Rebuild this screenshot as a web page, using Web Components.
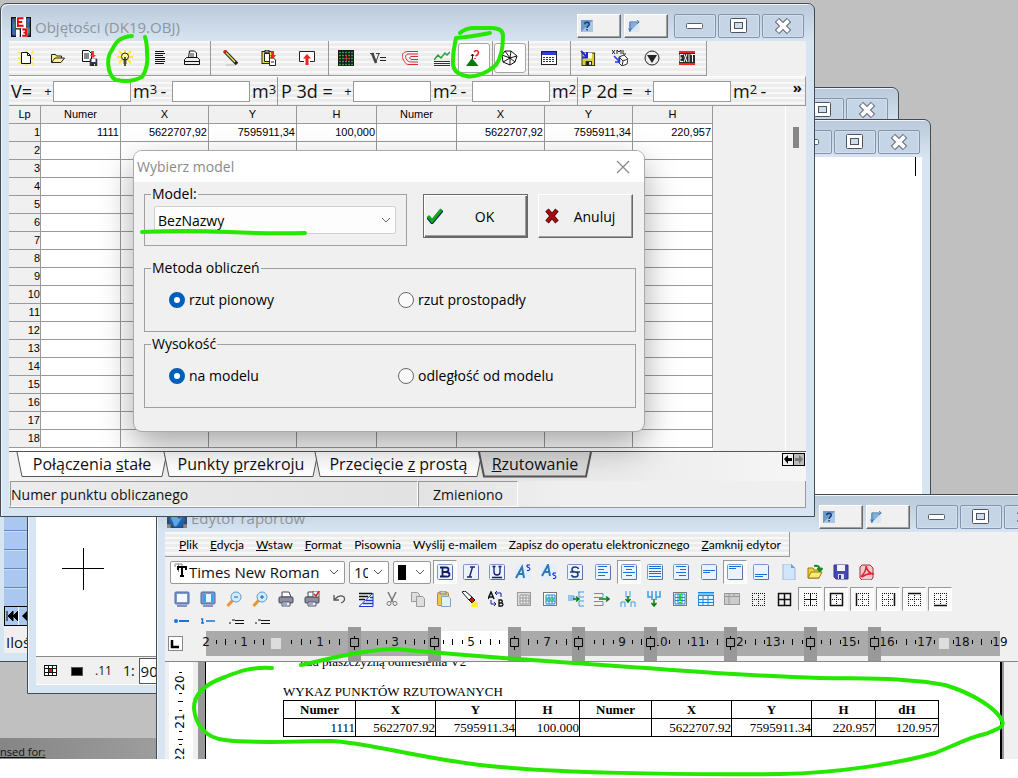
<!DOCTYPE html>
<html lang="pl">
<head>
<meta charset="utf-8">
<title>Objętości</title>
<style>
  html, body { margin: 0; height: 100%; background: #fff; overflow: hidden; }
  body { font-family: "Open Sans", "Noto Sans", sans-serif; font-size: 14px; color: #111; position: relative; }
</style>
</head>
<body>
<mdi-desktop></mdi-desktop>
<marker-strokes></marker-strokes>

<script>
const define = (name, html, setup) => {
  const template = document.createElement('template');
  template.innerHTML = html;
  customElements.define(name, class extends HTMLElement {
    static get observedAttributes() { return ['name']; }
    constructor() {
      super();
      this.attachShadow({ mode: 'open' }).append(template.content.cloneNode(true));
    }
    connectedCallback() { if (setup) setup.call(this, this.shadowRoot); }
    attributeChangedCallback() { if (this.isConnected && setup) setup.call(this, this.shadowRoot); }
  });
};

/* ---------- icon drawings, 16 x 16 grid ---------- */
const doc = (x, y) => `<path d="M${x} ${y}h6l3 3v8h-9z" fill="#fff" stroke="#111"/><path d="M${x + 6} ${y}v3h3" fill="none" stroke="#111"/>`;
const box = '<rect x=".5" y=".5" width="15" height="15" rx="1" fill="#eaf3ff" stroke="#7d97c9"/><path d="M15.500 2v13.500H2" fill="none" stroke="#5872ae"/>';
const lines = a => a.map(([x, y, w]) => `<path d="M${x} ${y}.5h${w}" stroke="#1670d8"/>`).join('');
const tblBox = '<rect x="1.500" y="1.500" width="13" height="13" fill="#fff" stroke="#777"/>';
const dotted = '<path d="M2 2.500h13M2 8.500h13M2 14.500h13M2.500 2v13M8.500 2v13M14.500 2v13" stroke="#111" stroke-dasharray="1 1" fill="none"/>';
const floppy = (x, y, s, c) => `<g transform="translate(${x} ${y}) scale(${s})"><rect x="0" y="0" width="14" height="14" fill="${c}" stroke="#222"/><rect x="3" y="0" width="8" height="6" fill="#fff"/><rect x="4" y="9" width="7" height="5" fill="#222"/><rect x="8" y="10" width="2" height="3" fill="#fff"/></g>`;
const printer = '<path d="M4 1h7l2 5H4z" fill="#fff" stroke="#445"/><rect x="1" y="6" width="14" height="6" rx="1" fill="#8d8f9c" stroke="#44465a"/><path d="M4 11h8v4H4z" fill="#eef" stroke="#556"/><path d="M5 13h4" stroke="#36c"/>';
const loupe = '<path d="M1.500 15L7 9" stroke="#e8962e" stroke-width="3"/><circle cx="10" cy="6" r="5" fill="#d3ecfb" stroke="#5b9bd0"/><path d="M8 6h4" stroke="#0a5ac8"/>';
const monitor = c => `<rect x="1" y="1" width="14" height="12" rx="1" fill="#7d97c9" stroke="#4f6aa8"/><rect x="3" y="3" width="10" height="8" fill="${c}"/><path d="M3 15h10" stroke="#8d8fc0" stroke-width="2"/>`;
const ICONS = {
  app: '<rect width="16" height="16" fill="#111"/><path d="M1 1h3v14H1zM12 1h3v14h-3z" fill="#456"/><path d="M1 2h1v2h1v3H2v3h1v4H1zM13 1h2v3h-1v4h1v5h-2z" fill="#3a6ad0"/><path d="M2 6h1v3H2zM14 9h1v4h-1z" fill="#3da552"/><rect x="4" y="0" width="8" height="9" fill="#fff"/><path d="M5 1h5M5 4h4M5 7h5M5.500 1v7" stroke="#e00" stroke-width="1.500"/><rect x="4" y="10" width="3" height="6" fill="#fff"/><rect x="8" y="9" width="5" height="7" fill="#fff"/><path d="M9 10h3v5H9M10 12.500h2" stroke="#e00" stroke-width="1.500" fill="none"/>',
  globe: '<rect width="16" height="16" fill="#38465e"/><circle cx="8" cy="9" r="6.500" fill="#1763b5"/><path d="M3 8q3-4 5-1t4 0-2 4-5 1z" fill="#62a4df"/><path d="M0 13h3v3H0zM13 13h3v3h-3z" fill="#888"/>',
  help: '<rect width="16" height="16" fill="#a9c6e3"/><path d="M0 16V0h16z" fill="#6c9acb"/><path d="M5 5.500C5 2 11 2 11 5.500 11 8 8 7.500 8 10.500M8 12v2" fill="none" stroke="#123a78" stroke-width="2"/>',
  dock: '<rect x="2" y="3" width="13" height="13" fill="#dbe8f4"/><path d="M2 16V3h13z" fill="#86afd6"/><path d="M2.500 16V2.500H14M12 0l3 2.500-3 2.500M0 11l2.500 3L5 11" fill="none" stroke="#1d5b9d"/>',
  newdoc: '<path d="M0 2l3 2M0 8h3M0 14l3-2M16 1l-3 3M16 8h-3M16 15l-3-3M8 0v2M8 14v2" stroke="#ffef4a" stroke-width="2"/>' + doc(3.5, 2.5),
  open: '<path d="M1.500 12.500v-8h4l1 1.500h5v2" fill="#fff28a" stroke="#222"/><path d="M1.500 12.500L5 8h9.500L11 12.500z" fill="#fff28a" stroke="#222"/>',
  savetxt: '<path d="M.500.500h6l3 3v8h-9z" fill="#fff" stroke="#111"/><path d="M2 4h5M2 6h5M2 8h5" stroke="#111"/>' + floppy(8, 9, .5, '#3a3a55') + '<path d="M9 1h3v4h2l-3 3-3-3h2V3H9z" fill="#f33"/>',
  bulb: '<path d="M8 0v16M0 7h16M2 1l12 12M14 1L2 13" stroke="#ffe92e" stroke-width="2"/><circle cx="8" cy="6.500" r="3.500" fill="#ffffa0" stroke="#222"/><path d="M6.500 11h3M6.500 13h3M7 15h2M8 7v3" stroke="#222" stroke-width="1.500"/>',
  text: '<path d="M3 1.500h9M3 3.500h10M3 5.500h8M3 7.500h10M3 9.500h10M3 11.500h10M3 13.500h9" stroke="#111"/>',
  print: '<path d="M4.500 8l1-7h5l2 2v5" fill="#fff" stroke="#111"/><path d="M6 4h4M6 6h4" stroke="#333"/><path d="M.500 9.500l2-2h11l2 2v5H.500z" fill="#eee" stroke="#111"/><path d="M1 11.500h14" stroke="#111"/>',
  pencil: '<path d="M1.500 1l12.500 13" stroke="#222" stroke-width="3.500"/><path d="M3 2.500l9 9.500" stroke="#e8df5a" stroke-width="1.500"/><path d="M1 .500l2 2" stroke="#d22" stroke-width="3"/><path d="M3 15h9" stroke="#bbb"/>',
  clip: '<rect x="1" y="1.500" width="10" height="12" fill="#f5e23c" stroke="#222"/><path d="M3.500 3.500h5v8h-5z" fill="#fff" stroke="#222"/><rect x="4" y="0" width="4" height="3" fill="#999" stroke="#222"/><path d="M8.500 8h4l2 2v5.500h-6z" fill="#fff" stroke="#222"/><path d="M10 12h3" stroke="#222"/><path d="M10 1h3v4h2l-3 4-3-4h2V3h-1z" fill="#e22"/>',
  up: '<path d="M5 11.500H.500v-10h15v10H11" fill="#fff" stroke="#222"/><path d="M8 4l4 4.500H9.500V15h-3V8.500H4z" fill="#e22"/>',
  grid: '<rect width="16" height="16" fill="#151a15"/><path d="M1 2.500h15M1 5.500h15M1 8.500h15M1 11.500h15M1 14.500h15" stroke="#2ea043" stroke-width="1.500" stroke-dasharray="2 1"/><path d="M6 8.500h5M8.500 6v5" stroke="#a33" stroke-dasharray="2 1"/>',
  vol: '<path d="M0 3.500h4M6 3.500h4" stroke="#444"/><path d="M2 3l4 10" stroke="#444" stroke-width="2.500"/><path d="M5.500 13L9 3.500" stroke="#444"/><path d="M10 7.500h6M10 10.500h6" stroke="#222"/>',
  coil: '<path d="M16 1.500H6C1 1.500-1 5 1 9s3 5.500 6 5.500h9M16 4H7C4 4 3 6 4 8.500S7 12 9 12h7M16 6.500H9q-3 1 0 3h7" fill="none" stroke="#c33"/>',
  chart: '<path d="M0 10l4-5 3 3 4-5 2 2 3-3" stroke="#2a9d3a" fill="none" stroke-width="1.500"/><path d="M0 11.500h16M0 15.500h16M0 13.500h16" stroke="#333"/>',
  cone: '<path d="M6 8l6.500 8H0z" fill="#087b12"/><path d="M6.500 9V4M5 6l1.500-2L8 6" stroke="#222" fill="none"/><path d="M8 2q3-3 4.500 0 0 3-3 4M9 8v1" stroke="#e22" fill="none" stroke-width="1.500"/>',
  mesh: '<path d="M3 1h6l6 5-2 6-5 3-7-3-1-7zM0 5l8 3 7-2M3 1l5 7 1-7M8 8l0 7M8 8l5 4M1 12l7-4" fill="#fff" stroke="#111"/>',
  sheet: '<rect x=".5" y="1.500" width="15" height="13" fill="#fff" stroke="#222"/><rect x="1" y="2" width="14" height="3" fill="#2d3fd0"/><path d="M2 7.500h12M2 9.500h12M2 11.500h12" stroke="#333" stroke-dasharray="2 1"/>',
  savegeo: floppy(2, 3, .9, '#d8d02e') + '<path d="M1 1l6 6M7 2v5.500H2" stroke="#1c2be0" stroke-width="2" fill="none"/>',
  xml: '<path d="M0 0l3 4M3 0L0 4M5 4V0l2 2 2-2v4M11 0v4h3" stroke="#222" fill="none"/><path d="M7 7l5-2 4 4-1 5-5 2-3-3zM7 7l4 4 5-2M11 11l-1 5" fill="#fff" stroke="#333"/><path d="M2 6l5 5M7.500 7v5H3" stroke="#2233dd" fill="none" stroke-width="1.500"/>',
  tri: '<circle cx="8" cy="8" r="7" fill="#eee" stroke="#222"/><path d="M3 5h10l-5 8z" fill="#222"/>',
  exit: '<rect y="1" width="16" height="14" fill="#2a2a2a"/><path d="M0 2h16M0 14h16" stroke="#f22" stroke-width="2"/><path d="M4 4.500H1v7h3M1 8h2M5 4l3 8M8 4l-3 8M10 4v8M11.500 4.500H16M13.500 4v8" stroke="#fff" fill="none"/>',
  bold: box + '<path d="M5.500 3v10M3 3.500h6q2.500 0 2.500 2T9 8q3.500 0 3.500 2.500T9 12.500H3M6 8h3" stroke="#151a66" fill="none" stroke-width="1.800"/>',
  italic: box + '<path d="M9.500 3l-3 10M7 3h5M4 13h5" stroke="#2a2470" stroke-width="1.500"/>',
  under: box + '<path d="M5 2v6q0 3 3 3t3-3V2M3.500 2.500h3M9.500 2.500h3M3 13.500h10" stroke="#151a66" fill="none" stroke-width="1.300"/>',
  sup: '<rect width="16" height="16" fill="#e4effb"/><path d="M1 14L7 3l2 11M3 10h5" stroke="#2f78b8" stroke-width="2" fill="none"/><path d="M15 1h-3v2q3 0 3 2t-3 1.500" stroke="#0010e0" fill="none"/>',
  sub: '<rect width="16" height="16" fill="#e4effb"/><path d="M1 12L7 1l2 11M3 8h5" stroke="#2f78b8" stroke-width="2" fill="none"/><path d="M15 9h-3v2q3 0 3 2t-3 1.500" stroke="#0010e0" fill="none"/>',
  strike: box + '<path d="M11.500 5Q11 3 8 3 5 3 5 5.500T8 8t3 2.500T8 13q-3 0-3.500-2M3 8h10" stroke="#1d3a78" fill="none" stroke-width="1.500"/>',
  left: box + lines([[3, 2, 9], [3, 5, 6], [3, 8, 10], [3, 11, 7]]),
  center: box + lines([[3, 2, 10], [5, 5, 6], [2, 8, 12], [5, 11, 6]]),
  justify: box + lines([[2, 2, 12], [2, 4, 12], [2, 7, 12], [2, 9, 12], [2, 12, 12]]),
  right: box + lines([[3, 2, 10], [7, 5, 6], [3, 8, 10], [6, 11, 7]]),
  mid: box + lines([[2, 6, 12], [2, 8, 7]]),
  top: box + lines([[2, 2, 12], [2, 4, 7]]),
  bottom: box + lines([[2, 10, 12], [2, 12, 8]]),
  page: '<path d="M2 0h8l4 4v12H2z" fill="#d2e6fa" stroke="#9db8dc"/><path d="M10 0v4h4" fill="#6fa0dd"/>',
  open2: '<path d="M1 14V4h5l1 2h5v8z" fill="#f2cf3b" stroke="#9a7b14"/><path d="M1 14l3-6h11l-3 6z" fill="#fbe97a" stroke="#9a7b14"/><path d="M7 2q6-1 6 4M10.500 4L13 7l2.500-3" fill="none" stroke="#128a1e" stroke-width="2"/>',
  save2: '<path d="M1 1h14v14H3l-2-2z" fill="#4747b8" stroke="#34348c"/><rect x="4" y="1" width="8" height="6" fill="#f2f2fa"/><rect x="5" y="10" width="6" height="5" fill="#dfe0f2"/><rect x="6" y="11" width="2" height="4" fill="#34348c"/>',
  pdf: '<path d="M1 3l2-2h8l3 3v10l-2 2H3l-2-2z" fill="#e8c9cc" stroke="#b02a35"/><path d="M2 13Q8 6 7 2q2 8 8 8-7-1-12 3" fill="none" stroke="#e0202c" stroke-width="1.500"/>',
  screen: monitor('#f4f8ff'),
  screen2: monitor('#34a3ee') + '<rect x="6" y="3" width="5" height="8" fill="#e8f4ff"/>',
  zout: loupe, zin: loupe + '<path d="M10 4v4" stroke="#0a5ac8"/>',
  printer, printer2: printer + '<rect x="9" y="0" width="6" height="6" fill="#fff" stroke="#555"/><path d="M10 3l2 2 3-5" stroke="#c22" fill="none" stroke-width="1.500"/>',
  undo: '<path d="M3 8q5-5 9-2 2 4-3 6M2 4v5h5" fill="none" stroke="#555" stroke-width="1.300"/>',
  fill: '<path d="M1 2.500h13M1 5.500h9M1 8.500h6" stroke="#111" stroke-width="1.500"/><path d="M15 2v13.500H1z" fill="#fff" stroke="#1c36d8"/><path d="M12 6.500h3M8 9.500h7M5 12.500h10" stroke="#1c36d8" stroke-width="1.500"/>',
  cut: '<path d="M4 1l5 10M12 1L7 11" stroke="#777" stroke-width="1.500"/><circle cx="5" cy="12.500" r="2" fill="none" stroke="#777"/><circle cx="11" cy="12.500" r="2" fill="none" stroke="#777"/>',
  copy: '<path d="M1.500 1.500h6l2 2v7h-8z" fill="#ddd" stroke="#999"/><path d="M6.500 5.500h6l2 2v8h-8z" fill="#ddd" stroke="#999"/>',
  paste: '<rect x="1.500" y="1.500" width="11" height="13" rx="1" fill="#f0c553" stroke="#b98a2a"/><rect x="4" y="0" width="6" height="3" fill="#ccc" stroke="#888"/><path d="M5.500 5.500h7l2 2v8h-9z" fill="#e4f0fc" stroke="#7fa3cf"/>',
  torch: '<path d="M0 1l3-1 7 6-3 3z" fill="#fff" stroke="#111"/><path d="M7 9l3-3 3 3-3 3z" fill="#c31515" stroke="#111"/><path d="M10 12l3-2 3 2v4h-7z" fill="#ffee2a"/>',
  ab: '<path d="M0 8l3-7 3 7M1 6h4" stroke="#111" fill="none" stroke-width="1.500"/><path d="M11 9v6h3q2-1.500 0-3h-3 2.500q1.500-1.500 0-3z" stroke="#111" fill="none" stroke-width="1.300"/><path d="M8 2h5v4M9 0L7 2l2 2M8 13H3V9M6 11l2 2-2 2" stroke="#1422a0" fill="none"/>',
  tgray: '<rect x="1.500" y="1.500" width="13" height="13" fill="#ddd" stroke="#999"/><path d="M4 4h9v9H4zM4 7h9M4 10h9M7 4v9M10 4v9" fill="#eee" stroke="#999"/>',
  tsel: tblBox + '<path d="M4 4h9v9H4zM7 4v9M10 4v9M4 7h9M4 10h9" fill="#fff" stroke="#1c86e0"/><path d="M4 8.500h9" stroke="#2d2" stroke-width="2" stroke-dasharray="2 1"/>',
  rowin: '<path d="M0 5h6v4H0M10 1h6M16 6h-5V1M16 10h-5v5h5M0 7h6" fill="none" stroke="#3a9be8"/><path d="M5 8h6M8 5.500l3 2.500-3 2.500" stroke="#087b12" fill="none" stroke-width="1.500"/>',
  rowout: '<path d="M0 2.500h9v4H0M0 10.500h9v4H0" fill="none" stroke="#3a9be8"/><path d="M5 8h10M12 5.500L15 8l-3 2.500" stroke="#087b12" fill="none" stroke-width="1.500"/>',
  colin: '<path d="M6 0v6h4V0M1 16v-5h4v5M11 16v-5h4v5" fill="none" stroke="#3a9be8"/><path d="M8 5v5M5.500 8L8 11l2.500-3" stroke="#087b12" fill="none" stroke-width="1.500"/>',
  colout: '<path d="M2 0v6h4v3M6 0v6M10 0v9M14 0v6h-4" fill="none" stroke="#3a9be8" stroke-width="1.500"/><path d="M8 8v7M5.500 12L8 15l2.500-3" stroke="#087b12" fill="none" stroke-width="1.500"/>',
  tcol: tblBox + '<path d="M3 3h10v10H3zM6 3v10M10 3v10M3 6.500h10M3 9.500h10" fill="#fff" stroke="#1c86e0"/><path d="M8 3v10" stroke="#2d2" stroke-width="2" stroke-dasharray="3 1"/>',
  tblue: '<rect x=".5" y="1.500" width="15" height="13" fill="#e2f2ff" stroke="#1c86e0"/><path d="M0 4.500h16M0 8.500h16M0 11.500h16M5 2v13M10 2v13" stroke="#1c86e0"/><path d="M0 3h16" stroke="#7cc0f4" stroke-width="2"/>',
  tgray2: '<rect x=".5" y="2.500" width="15" height="11" fill="#ccc" stroke="#999"/><path d="M0 5.500h16M5 3v11M10 3v3" stroke="#999"/>',
  b0: dotted,
  ball: '<path d="M2.500 2.500h12v12h-12zM8.500 2v13M2 8.500h13" fill="none" stroke="#111" stroke-width="1.500"/>',
  bin: dotted + '<path d="M8.500 2v13M2 8.500h13" stroke="#111"/>',
  bout: dotted + '<path d="M2.500 2.500h12v12h-12z" fill="none" stroke="#111" stroke-width="1.500"/>',
  bl: dotted + '<path d="M2.500 2v13" stroke="#111" stroke-width="1.500"/>',
  br: dotted + '<path d="M14.500 2v13" stroke="#111" stroke-width="1.500"/>',
  bt: dotted + '<path d="M2 2.500h13" stroke="#111" stroke-width="1.500"/>',
  bb: dotted + '<path d="M2 14.500h13" stroke="#111" stroke-width="1.500"/>',
  l1: '<circle cx="2" cy="8" r="2" fill="#1473e6"/><path d="M5 8h10" stroke="#1473e6" stroke-width="2"/>',
  l2: '<path d="M1 6h1.500v4M1 10h3M6 8h9" stroke="#1473e6" stroke-width="1.500" fill="none"/>',
  l3: '<path d="M1 10h2M4 7h3M7 7.500h9M7 10.500h9" stroke="#111"/>',
  gridred: '<rect x="1.500" y="2.500" width="12" height="10" fill="#fff" stroke="#111"/><path d="M1 5.500h13M1 9.500h13M5.500 3v10M9.500 3v10" stroke="#111"/><rect x="6" y="6" width="3" height="3" fill="#e11"/>',
  black: '<rect x="2.500" y="4.500" width="11" height="8" fill="#000" stroke="#555"/>',
  check: '<path d="M1 9l4 5L15 2" fill="none" stroke="#0b2a5e" stroke-width="4"/><path d="M1 8l4 5L14.500 1.500" fill="none" stroke="#10a818" stroke-width="3"/>',
  cross: '<path d="M3 2l10 12M13 2L3 14" stroke="#4a0b0b" stroke-width="4.500"/><path d="M3 2l9.500 11.500M12.500 2.500L3 13.500" stroke="#a80d12" stroke-width="3"/>'
};
define('app-icon', `<style>:host{display:inline-block;width:16px;height:16px;flex:none}:host([size="20"]){width:20px;height:20px}:host([size="12"]){width:12px;height:12px}svg{display:block;width:100%;height:100%}</style><svg viewBox="0 0 16 16" aria-hidden="true"></svg>`,
  function (root) { root.querySelector('svg').innerHTML = ICONS[this.getAttribute('name')] || ''; });

define('tool-button', `<style>
  :host{display:flex;align-items:center;justify-content:center;width:32px;flex:none}
  :host([wide]){width:38px} :host([small]){width:26px}
  button{all:unset;box-sizing:border-box;display:flex;align-items:center;justify-content:center;width:24px;height:24px}
  :host([pressed]) button{width:32px;height:30px;background:#fff;border:1px solid #a5a5a5;border-radius:3px}
  :host([pressed][small]) button{width:24px;height:24px;border-radius:0;background:#fafafa;border-color:#999 #fff #fff #999}
  </style><button type="button"><app-icon></app-icon></button>`,
  function (root) {
    root.querySelector('app-icon').setAttribute('name', this.getAttribute('icon'));
    root.querySelector('button').setAttribute('aria-label', this.getAttribute('icon'));
  });

/* ---------- window frame ---------- */
define('mdi-window', `<style>
  :host{display:flex;flex-direction:column;box-sizing:border-box;border:1px solid #454b52;border-radius:7px 7px 0 0;
    background:linear-gradient(#bac9d9,#d7e4f1 37px);padding:0 8px 8px;box-shadow:inset 1px 1px #eef5fb}
  header{display:flex;align-items:center;height:37px;flex:none;gap:4px;padding:0 2px;color:#8e959c;font-size:15px}
  h2{font:inherit;margin:8px 0 0;flex:1;white-space:nowrap}
  .ic{display:flex;margin-top:8px}
  .tools{display:flex;gap:3px;margin-right:2px}
  .caps{display:flex;gap:2px}
  .caps button{all:unset;box-sizing:border-box;width:42px;height:24px;border:1px solid #8294b0;border-radius:2px;background:#c6d5e6;display:grid;place-items:center;margin-top:6px;box-shadow:inset 0 0 0 1px #d3dfec}
  .body{flex:1;min-height:0;display:flex;flex-direction:column;overflow:hidden}
  </style>
  <header><span class="ic"><slot name="icon"></slot></span><h2></h2><div class="tools"><slot name="tools"></slot></div>
  <div class="caps">
   <button type="button" aria-label="Minimalizuj"><svg width="18" height="18"><rect x=".5" y="6.500" width="16" height="5" rx="1" fill="#fff" stroke="#565f70"/></svg></button>
   <button type="button" aria-label="Maksymalizuj"><svg width="18" height="18"><rect x=".5" y="1.500" width="16" height="14" rx="1" fill="#fff" stroke="#4d5364"/><rect x="4.500" y="5.500" width="8" height="6" fill="#cfdcea" stroke="#4d5364"/></svg></button>
   <button type="button" aria-label="Zamknij"><svg width="18" height="18"><path d="M3 3l12 12M15 3L3 15" stroke="#4d5364" stroke-width="6"/><path d="M3.500 3.500l11 11M14.500 3.500l-11 11" stroke="#fff" stroke-width="4"/></svg></button>
  </div></header><div class="body"><slot></slot></div>`,
  function (root) { root.querySelector('h2').textContent = this.getAttribute('caption') || ''; });

define('caption-key', `<style>:host{display:block;margin-top:6px}button{all:unset;box-sizing:border-box;display:flex;align-items:center;width:44px;height:24px;padding-left:3px;background:#f0f0f0;border:1px solid;border-color:#fff #696969 #696969 #fff;box-shadow:inset -1px -1px #a0a0a0}</style><button type="button"><app-icon size="12"></app-icon></button>`,
  function (root) {
    root.querySelector('app-icon').setAttribute('name', this.getAttribute('icon'));
    root.querySelector('button').setAttribute('aria-label', this.getAttribute('icon') === 'help' ? 'Pomoc' : 'Dokuj');
  });

/* ---------- main window ---------- */
const stripes = 'background:repeating-linear-gradient(#f8f8f8 0 2px,#ececec 2px 5px);';
const tb = (s, extra = '') => s.split(' ').map(n => n === '|' ? '<i></i>' : `<tool-button ${extra} icon="${n.replace(/[*+]/g, '')}" ${n.includes('*') ? 'wide' : ''} ${n.includes('+') ? 'pressed' : ''}></tool-button>`).join('');
define('main-toolbar', `<style>
  :host{display:block;background:#f0f0f0}
  .bar{display:flex;box-sizing:border-box;width:698px;height:35px;border-right:1px solid #999;padding-left:1px;border-bottom:1px solid #999;${stripes}}
  i{width:4px;flex:none;background:linear-gradient(#999,#999) 50% 0/1px 100% no-repeat}
  </style><div class="bar" role="toolbar">${tb('newdoc open savetxt bulb* text print | pencil* clip* up* | grid vol coil chart cone+ | mesh+ | sheet* | savegeo xml tri exit*')}</div>`);

define('volume-bar', `<style>
  :host{display:flex;align-items:center;box-sizing:border-box;height:30px;border:solid #999;border-width:0 1px 1px 0;border-top:1px solid #fff;white-space:nowrap;overflow:hidden;font-size:18px;${stripes}}
  .g{display:flex;align-items:center;height:100%;box-sizing:border-box;padding-left:2px;width:269px;border-right:1px solid #999;flex:none}
  .g.p{width:300px;padding-left:3px} .g.l{width:auto;flex:1;border:0;padding-left:3px}
  .n{width:32px;flex:none}.p .n,.l .n{width:62px}
  .s{width:10px;text-align:center;font-size:13px;flex:none}
  .s.d{width:17px;font-size:18px}
  input{all:unset;box-sizing:border-box;width:78px;height:21px;background:#fff;border:1px solid #999;flex:none;margin-top:1px}
  .m{padding-left:2px;width:22px;flex:none;display:flex;align-items:center} small{font-size:13px;line-height:13px;margin-bottom:4px}
  button{all:unset;margin:0 3px 8px auto;font:bold 15px/20px "Open Sans",sans-serif}
  </style>
  <div class="g"><span class="n">V=</span><span class="s">+</span><input aria-label="V plus"><span class="m">m<small>3</small></span><span class="s d">-</span><input aria-label="V minus"><span class="m">m<small>3</small></span></div>
  <div class="g p"><span class="n">P 3d =</span><span class="s">+</span><input aria-label="P 3d plus"><span class="m">m<small>2</small></span><span class="s d">-</span><input aria-label="P 3d minus"><span class="m">m<small>2</small></span></div>
  <div class="g l"><span class="n">P 2d =</span><span class="s">+</span><input aria-label="P 2d plus"><span class="m">m<small>2</small></span><span class="s d">-</span><button type="button" aria-label="Więcej">»</button></div>`);

const gridRows = Array.from({ length: 18 }, (_, i) => {
  const v = i ? Array(8).fill('') : ['1111', '5622707,92', '7595911,34', '100,000', '', '5622707,92', '7595911,34', '220,957'];
  return `<tr><th scope="row">${i + 1}</th>${v.map(t => `<td>${t}</td>`).join('')}</tr>`;
}).join('');
define('point-grid', `<style>
  :host{display:flex;height:345px;flex:none;overflow:hidden;background:#f0f0f0;font:11px/17px "Liberation Sans",Arial,sans-serif;color:#000}
  .t{width:704px;background:#fff;flex:none;overflow:hidden}
  table{border-collapse:separate;border-spacing:0;table-layout:fixed;width:704px}
  th,td{box-sizing:border-box;height:18px;padding:0 1px;border:solid #999;border-width:0 1px 1px 0;font-weight:normal;text-align:right;white-space:nowrap}
  thead th{text-align:center} th{background:#f0f0f0}tbody th{padding:0}
  .sb{margin-left:auto;width:20px;border-left:1px solid #fff;display:flex;justify-content:center;padding-top:21px}
  .sb div{width:6px;height:21px;background:#868686}
  </style><div class="t"><table><colgroup><col style="width:32px"><col style="width:80px"><col style="width:88px"><col style="width:88px"><col style="width:80px"><col style="width:80px"><col style="width:88px"><col style="width:88px"><col style="width:80px"></colgroup>
  <thead><tr>${['Lp', 'Numer', 'X', 'Y', 'H', 'Numer', 'X', 'Y', 'H'].map(t => `<th scope="col">${t}</th>`).join('')}</tr></thead><tbody>${gridRows}</tbody></table></div><div class="sb"><div></div></div>`);

define('sheet-tabs', `<style>
  :host{display:flex;height:30px;flex:none;border-top:1px solid #555;box-sizing:border-box;padding-left:8px;background:linear-gradient(90deg,#f2f2f2,#e4e4e4 60%,#f6f6f6);font-size:16px}
  button{all:unset;position:relative;box-sizing:border-box;height:25px;line-height:25px;text-align:center;white-space:nowrap;margin-right:-3px}
  svg{position:absolute;inset:0;width:100%;height:100%;overflow:visible}
  span{position:relative}
  .arr{margin:1px 2px 0 auto;display:flex;height:13px}
  .arr button{width:12px;height:13px;border:1px solid #000;background:#f0f0f0;margin:0 -1px 0 0;display:block}
  .arr path{fill:#000}.arr .off{background:#bbb}.arr .off path{fill:#777}
  </style>
  ${[['Połączenia <u>s</u>tałe', 150], ['Punkty <u>p</u>rzekroju', 154], ['Przecięcie <u>z</u> prostą', 167], ['<u>R</u>zutowanie', 112]].map(([t, w], i) => `<button type="button" style="width:${w}px"><svg viewBox="0 0 ${w} 25" preserveAspectRatio="none" aria-hidden="true"><path d="M0 0L5 24.500H${w - 5}L${w} 0" fill="${i === 3 ? '#d9d9d9' : '#fff'}" stroke="#555" stroke-width="${i === 3 ? 2 : 1}"/></svg><span>${t}</span></button>`).join('')}
  <div class="arr"><button type="button" aria-label="Poprzedni"><svg viewBox="0 0 10 11"><path d="M1 5l4-4v3h4v3H5v3z"/></svg></button><button type="button" class="off" aria-label="Następny"><svg viewBox="0 0 10 11"><path d="M9 5L5 1v3H1v3h4v3z"/></svg></button></div>`);

define('status-line', `<style>
  :host{display:flex;height:27px;flex:none;box-sizing:border-box;background:linear-gradient(90deg,#ececec,#e2e2e2 50%,#efefef 70%);border-bottom:1px solid #999;border-right:1px solid #999;font-size:14px;line-height:25px}
  div{box-sizing:border-box;border:solid;border-width:1px;border-color:#999 #fff #fff #999;white-space:nowrap}
  .a{width:408px;margin-left:1px}.b{width:100px;text-align:center}
  </style><div class="a">Numer punktu obliczanego</div><div class="b">Zmieniono</div>`);

/* ---------- dialog ---------- */
define('model-dialog', `<style>
  :host{display:flex;flex-direction:column;background:#f0f0f0;border-radius:8px;overflow:hidden;box-shadow:0 0 0 1px #aaa,0 14px 34px rgba(0,0,0,.35);font-size:14px;color:#000}
  header{display:flex;align-items:center;height:31px;flex:none;background:#fff;color:#8a8a8a;padding:0 14px 0 3px;justify-content:space-between}
  h2{font:inherit;margin:0} header button{all:unset;display:flex}
  .body{padding:2px 8px 0 10px;display:flex;flex-direction:column}
  .row{display:flex;align-items:flex-start}
  fieldset{margin:0;padding:0 10px;min-width:0;border:1px solid #a0a0a0;box-sizing:border-box}
  legend{padding:0 1px;margin-left:-4px;line-height:20px}
  .m{width:263px;height:62px}
  .m label{position:absolute;width:1px;height:1px;overflow:hidden}
  .sel{display:flex;align-items:center;position:relative;margin:2px 0 0 -1px}
  select{appearance:none;width:242px;height:28px;border:1px solid #d0d0d0;border-radius:2px;background:#fdfdfd;font:inherit;color:#000;padding:0 3px;box-sizing:border-box}
  .sel svg{position:absolute;right:5px}
  .act{display:flex;align-items:center;height:44px;box-sizing:border-box;font:inherit;padding:0 5px;background:#f0f0f0;border:1px solid;border-color:#fff #696969 #696969 #fff;box-shadow:inset -1px -1px #a0a0a0;color:#000;border-radius:0;margin-top:10px}
  .act span{flex:1;text-align:center;padding-left:2px}
  .ok{width:105px;margin:10px 10px 0 16px;border:1px solid #696969;box-shadow:inset 1px 1px #fff,inset -1px -1px #696969,inset -2px -2px #a0a0a0;padding:0 3px}.no{width:95px}
  .opt{height:74px;display:flex;margin-top:2px}
  .opt.f{margin-top:12px}
  .opt div{display:grid;grid-template-columns:229px 1fr;padding:12px 0 0 14px}
  .opt label{display:flex;align-items:center;gap:4px}
  input{appearance:none;margin:0;width:16px;height:16px;border:1px solid #666;border-radius:50%;background:#fafafa}
  input:checked{border:5px solid #005fb8;background:#fff}
  </style>
  <header><h2>Wybierz model</h2><button type="button" aria-label="Zamknij"><svg width="14" height="14"><path d="M1 1l12 12M13 1L1 13" stroke="#888" stroke-width="1.200"/></svg></button></header>
  <div class="body"><div class="row">
    <fieldset class="m"><legend>Model:</legend><div class="sel"><label for="mod">Model</label><select id="mod"><option>BezNazwy</option></select><svg width="10" height="6"><path d="M1 1l4 4 4-4" fill="none" stroke="#666"/></svg></div></fieldset>
    <button type="button" class="act ok"><app-icon name="check"></app-icon><span>OK</span></button>
    <button type="button" class="act no"><app-icon name="cross"></app-icon><span>Anuluj</span></button></div>
    <fieldset class="opt f"><legend>Metoda obliczeń</legend><div><label><input type="radio" name="met" checked>rzut pionowy</label><label><input type="radio" name="met">rzut prostopadły</label></div></fieldset>
    <fieldset class="opt"><legend>Wysokość</legend><div><label><input type="radio" name="wys" checked>na modelu</label><label><input type="radio" name="wys">odległość od modelu</label></div></fieldset>
  </div>`);

/* ---------- report editor ---------- */
define('editor-menu', `<style>
  :host{display:block;background:#f0f0f0}
  nav{display:flex;align-items:center;gap:12px;box-sizing:border-box;width:625px;height:25px;padding-left:14px;border:solid #999;border-width:0 1px 1px 0;font-family:Lato,"Open Sans",sans-serif;font-size:12px;white-space:nowrap;${stripes}}
  a{color:#000;text-decoration:none}
  </style><nav>${['<u>P</u>lik', '<u>E</u>dycja', '<u>W</u>staw', '<u>F</u>ormat', 'Pisownia', 'Wyślij e-mailem', 'Zapisz do operatu elektronicznego', '<u>Z</u>amknij edytor'].map(t => `<a href="#">${t}</a>`).join('')}</nav>`);

const chev = '<svg class="c" width="10" height="6" aria-hidden="true"><path d="M1 1l4 4 4-4" fill="none" stroke="#555"/></svg>';
define('editor-tools', `<style>
  :host{display:flex;flex-direction:column;background:#f0f0f0;height:71px;flex:none;padding:2px 0 0 4px;white-space:nowrap}
  .r{display:flex;align-items:center;height:26px;flex:none} .r.z{height:28px}.r.y{height:16px}
  .g{display:flex;margin-right:2px}
  .k{position:relative;display:flex;align-items:center;margin:0 4px 0 1px}
  .k+.k{margin-left:0}.k.l{margin-right:1px}
  .t{position:absolute;left:4px;top:2px}
  select{appearance:none;box-sizing:border-box;height:23px;border:1px solid #999;border-radius:2px;background:#fff;font:15px "Open Sans",sans-serif;color:#111;padding:0 0 0 4px;margin:0}
  .f{width:175px;padding-left:18px}.s{width:40px;padding-right:20px}.c2{width:38px;color:transparent}
  .c{position:absolute;right:6px} .k b{position:absolute;left:5px;width:8px;height:15px;background:#000}
  </style>
  <div class="r"><span class="k"><select class="f" aria-label="Czcionka"><option>Times New Roman</option></select><svg class="t" width="14" height="14"><path d="M1 4V1h7v3M4.500 1v8" fill="none" stroke="#888"/><path d="M4 7V4h8v3M8 4v9M6 13h4" fill="none" stroke="#000" stroke-width="2"/></svg>${chev}</span><span class="k"><select class="s" aria-label="Rozmiar"><option>10</option></select>${chev}</span><span class="k l"><select class="c2" aria-label="Kolor"><option></option></select><b></b>${chev}</span>
  <div class="g">${tb('bold+ italic under sup sub strike', 'small')}</div><div class="g">${tb('left center+ justify right', 'small')}</div><div class="g">${tb('mid top+ bottom', 'small')}</div><div class="g">${tb('page open2 save2 pdf', 'small')}</div></div>
  <div class="r z"><div class="g">${tb('screen screen2 zout zin printer printer2', 'small')}</div><div class="g">${tb('undo fill cut copy paste torch ab', 'small')}</div><div class="g">${tb('tgray tsel rowin rowout colin colout tcol tblue tgray2 b0 ball bin+ bout+ bl+ br+ bt+ bb+', 'small')}</div></div>
  <div class="r y"><div class="g">${tb('l1 l2', 'small')}</div><div class="g">${tb('l3 l3', 'small')}</div></div>`);

const cm = 37.8;
let hr = '';
for (let i = -7; i <= 75; i++) {
  const x = Math.round(117 + i * cm / 4) + .5;
  if (i % 4) hr += `<path d="M${x} ${i % 2 ? 13 : 12}v${i % 2 ? 4 : 6}" stroke="#000"/>`;
}
const marks = [189, 269, 349, 413, 485, 565, 645, 709];
const nums = [[-2, '2'], [-1, '1'], [1, '1'], [3, '3'], [5, '5'], [7, '7'], [9, '9'], [10, '10'], [11, '11'], [12, '12'], [13, '13'], [15, '15'], [16, '16'], [17, '17'], [18, '18'], [19, '19']];
define('h-ruler', `<style>:host{display:block;height:36px;flex:none;background:#f0f0f0;border-bottom:1px solid #888;box-sizing:border-box;margin-top:-4px;padding-top:1px}
  svg{display:block}text{font:12px "DejaVu Sans",sans-serif;fill:#111}</style>
  <svg width="860" height="34"><rect x="41" y="4" width="794" height="25" fill="#aaa"/><rect x="276" y="4" width="67" height="25" fill="#fff"/>
  ${hr}${nums.map(([n, t]) => `<text x="${Math.round(117 + n * cm)}" y="19" text-anchor="middle">${t}</text>`).join('')}
  ${marks.map(x => `<rect x="${x - 6}" y="0" width="13" height="34" fill="#999"/><path d="M${x - 3.5} 11.500h8v8h-8zM${x + .5} 9v3M${x + .5} 19v4" fill="none" stroke="#000"/>`).join('')}
  <rect x="106" y="11" width="10" height="11" fill="#ddd"/><rect x="774" y="11" width="10" height="11" fill="#ddd"/>
  <rect x="3.500" y="9.500" width="14" height="14" fill="#fff" stroke="#888"/><path d="M7 13v7h7" stroke="#000" stroke-width="2.500" fill="none"/></svg>`);

let vr = '';
[[20, 21], [21, 59], [22, 93]].forEach(([n, y]) => { vr += `<text transform="translate(15 ${y}) rotate(-90)" text-anchor="middle">${n}</text><path d="M10 ${y - 11}.5h3M10 ${y + 10}.5h3M9 ${y + 18}.5h5" stroke="#000"/>`; });
const R = ['Numer', 'X', 'Y', 'H', 'Numer', 'X', 'Y', 'H', 'dH'];
const V = ['1111', '5622707.92', '7595911.34', '100.000', '', '5622707.92', '7595911.34', '220.957', '120.957'];
define('report-page', `<style>
  :host{display:flex;flex:1;background:#f0f0f0;min-height:0;overflow:hidden}
  .v{width:24px;margin-left:4px;background:#fff;flex:none}.v text{font:12px "DejaVu Sans",sans-serif}
  .v svg{display:block}
  .p{margin-left:5px;border:solid #999;border-width:0 2px 0 7px;flex:none;background:#fff}
  .in{border:solid #000;border-width:0 2px 0 1px;width:797px;padding-left:77px;box-sizing:border-box;height:100%;font:13px/16px "Liberation Serif","Times New Roman",serif;color:#000;overflow:hidden}
  p{margin:0}.cut{margin:-8px 0 0 17px;height:16px}.h{margin-top:14px}
  table{border-collapse:collapse;table-layout:fixed;width:656px}
  th,td{border:1px solid #000;height:18px;padding:0;box-sizing:border-box;line-height:16px}
  td{text-align:right}
  </style><div class="v"><svg width="24" height="110">${vr}</svg></div><div class="p"><div class="in"><p class="cut">nad płaszczyzną odniesienia V2</p><p class="h">WYKAZ PUNKTÓW RZUTOWANYCH</p>
  <table><colgroup>${[72, 80, 80, 64, 72, 80, 80, 64, 63].map(w => `<col style="width:${w}px">`).join('')}</colgroup><thead><tr>${R.map(t => `<th scope="col">${t}</th>`).join('')}</tr></thead><tbody><tr>${V.map(t => `<td>${t}</td>`).join('')}</tr></tbody></table></div></div>`);

/* ---------- background panels ---------- */
define('record-panel', `<style>
  :host{display:flex;flex-direction:column;flex:1;background:#f0f0f0;font-size:15px}
  .rows{flex:1;background:repeating-linear-gradient(to top,#a9c7ef 0 17px,#c9dcf5 17px 18px,#5f87c8 18px 19px)}
  .nav{display:flex;gap:1px;background:#fff;border:1px solid #000;height:18px;flex:none}
  .nav button{all:unset;width:13px;background:#a9c7ef;display:grid;place-items:center}
  div.t{height:27px;line-height:32px;padding-left:2px;flex:none}
  </style><div class="rows"></div><div class="nav"><button type="button" aria-label="Pierwszy"><svg width="12" height="10"><path d="M1 0v10M7 0L2 5l5 5zM12 0L7 5l5 5z" stroke="#000"/></svg></button><button type="button" aria-label="Wstecz"><svg width="12" height="10"><path d="M7 0L2 5l5 5z"/></svg></button></div><div class="t">Ilość</div>`);

define('map-panel', `<style>
  :host{display:flex;flex-direction:column;flex:1;background:#fff}
  .c{flex:1;display:flex;align-items:flex-end;padding:0 0 66px 26px}
  .b{display:flex;align-items:center;height:27px;flex:none;background:#f0f0f0;border-top:1px solid #888;padding-left:7px;gap:10px;margin-bottom:1px}
  small{font-size:12px} .b input{all:unset;width:60px;height:24px;background:#fff;border:1px solid #555;padding-left:1px;margin-left:-6px;font-size:15px}
  label{margin-left:1px}
  </style><div class="c"><svg width="42" height="42"><path d="M21.500 0v42M0 20.500h42" stroke="#000"/></svg></div>
  <div class="b"><app-icon name="gridred"></app-icon><app-icon name="black"></app-icon><small>.11</small><label for="sc">1:</label><input id="sc" value="900"></div>`);

define('mdi-desktop', `<style>
  :host{display:block;position:relative;height:calc(100vh - 19px);background:#c0c0c0;overflow:hidden}
  mdi-window,model-dialog,.lic{position:absolute}
  .a{left:400px;top:87px;width:499px;height:300px}
  .b{left:400px;top:119px;width:531px;height:500px}
  .c{left:-5px;top:300px;width:300px;height:362px}
  .d{left:27px;top:300px;width:400px;height:394px}
  .lic{left:0;bottom:0;width:400px;height:21px;background:linear-gradient(90deg,#858585,#aaa 60%);font:11px/15px "Open Sans",sans-serif;text-decoration:underline;box-sizing:border-box;padding-top:6px}
  .e{left:156px;top:494px;width:901px;height:400px}
  .m{left:0;top:3px;width:815px;height:514px}
  model-dialog{left:134px;top:151px;width:510px;height:280px}
  .doc{flex:1;background:#fff;display:flex;justify-content:flex-end;padding-right:6px}
  .doc i{width:1px;height:19px;background:#000}
  </style>
  <mdi-window class="a"><div class="doc"></div></mdi-window>
  <mdi-window class="b"><div class="doc"><i></i></div></mdi-window>
  <mdi-window class="c"><record-panel></record-panel></mdi-window>
  <div class="lic">nsed for:</div>
  <mdi-window class="d"><map-panel></map-panel></mdi-window>
  <mdi-window class="e" caption="Edytor raportów"><app-icon slot="icon" size="20" name="globe"></app-icon><caption-key slot="tools" icon="help"></caption-key><caption-key slot="tools" icon="dock"></caption-key>
    <editor-menu></editor-menu><editor-tools></editor-tools><h-ruler></h-ruler><report-page></report-page></mdi-window>
  <mdi-window class="m" caption="Objętości (DK19.OBJ)"><app-icon slot="icon" size="20" name="app"></app-icon><caption-key slot="tools" icon="help"></caption-key><caption-key slot="tools" icon="dock"></caption-key>
    <main-toolbar></main-toolbar><volume-bar></volume-bar><point-grid></point-grid><sheet-tabs></sheet-tabs><status-line></status-line></mdi-window>
  <model-dialog role="dialog" aria-label="Wybierz model"></model-dialog>`);

define('marker-strokes', `<style>:host{position:absolute;left:0;top:0;pointer-events:none}svg{display:block}path{fill:none;stroke:#27e600;stroke-width:4;stroke-linecap:round;stroke-linejoin:round}</style>
  <svg width="1018" height="778" aria-hidden="true">
  <path d="M132 36C118 37 115 44 112 50C107 56 108 65 109 70C111 76 114 80 117 80C126 82 136 80 142 77C147 70 148 60 147 52C147 44 146 40 145 37"/>
  <path d="M460 33Q465 28 475 28L492 28Q503 28 503 36Q503 55 496 65C487 73 475 78 466 76C456 74 452 68 453 60C453 50 455 44 456 38Q470 37 490 33"/>
  <path d="M142 232Q185 230 228 232T305 233"/>
  <path d="M272 668C250 667 240 671 225 677C205 684 194 694 194 708C195 724 205 738 225 740C255 744 300 741 330 741C365 742 415 757 480 765C550 773 680 775 780 774C840 773 900 763 935 753C960 743 970 737 985 734C998 729 1005 727 1002 721C998 710 975 694 945 685C900 677 870 679 820 678C750 676 690 671 630 667C540 661 450 654 395 649C360 650 325 660 301 665"/>
  </svg>`);
</script>
</body>
</html>
